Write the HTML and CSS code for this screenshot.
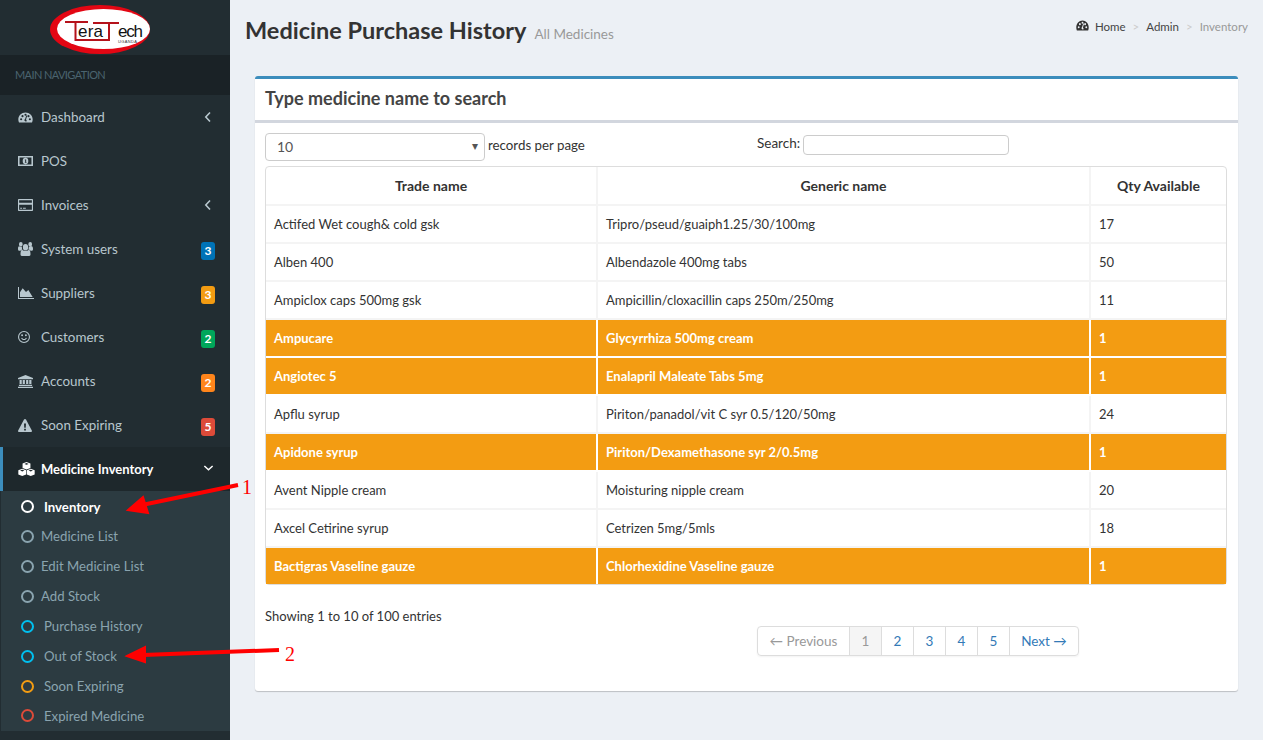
FILE: index.html
```html
<!DOCTYPE html>
<html>
<head>
	<title>Medicine Purchase History</title>
	<link rel="stylesheet" href="styles.css">
</head>
<body>
	<svg width="0" height="0" class="defs">
		<symbol id="i-gauge" viewBox="0 0 24 18" preserveAspectRatio="none"><path fill-rule="evenodd" d="M12 1C5.600 1 .5 6.100.5 12.300c0 1.800.4 3.400 1.100 4.700h20.800c.7-1.300 1.100-2.900 1.100-4.700C23.500 6.100 18.400 1 12 1zM5 13.500a1.700 1.700 0 1 1 0-3.400 1.700 1.700 0 0 1 0 3.400zm2.200-5a1.700 1.700 0 1 1 0-3.400 1.700 1.700 0 0 1 0 3.400zM12 6.200a1.700 1.700 0 1 1 0-3.400 1.700 1.700 0 0 1 0 3.400zm1.800 8.800a2.200 2.200 0 0 1-3.600-1.800c.1-.7.500-1.300 1.100-1.600l2-6 1.500.5-2 6c.9.700 1.300 1.900 1 2.900zm3-6.500a1.700 1.700 0 1 1 0-3.400 1.700 1.700 0 0 1 0 3.400zM19 13.500a1.700 1.700 0 1 1 0-3.400 1.700 1.700 0 0 1 0 3.400z"/></symbol>
		<symbol id="i-money" viewBox="0 0 24 14" preserveAspectRatio="none"><path fill-rule="evenodd" d="M0 0h24v14H0zM2.500 2.200v9.600h19V2.200zM12 2.500a4.500 4.500 0 1 1 0 9 4.500 4.500 0 0 1 0-9zM11 5v1h.5v2.500H11v1h2.500v-1H13V5z"/></symbol>
		<symbol id="i-card" viewBox="0 0 24 18" preserveAspectRatio="none"><path fill-rule="evenodd" d="M1.500 0h21c.8 0 1.500.7 1.500 1.500v15c0 .8-.7 1.500-1.500 1.500h-21C.7 18 0 17.300 0 16.500v-15C0 .7.700 0 1.500 0zm.3 1.800v3.700h20.400V1.800zm0 6.700v7.700h20.400V8.500zM3.500 13h3v1.500h-3zm4.500 0h4.500v1.500H8z"/></symbol>
		<symbol id="i-users" viewBox="0 0 24 18" preserveAspectRatio="none"><path d="M7.500 9.500c-1.400 0-2.800.7-3.500 1.800H2C.7 11.300 0 10.500 0 9c0-2 .5-3.500 1.800-3.500.3 0 1.500 1 3 1 .5 0 1-.1 1.500-.3-.1.500-.1.800-.1 1.200 0 .9.300 1.800.8 2.600zM4.500 0a3 3 0 1 1 0 6 3 3 0 0 1 0-6zm15 0a3 3 0 1 1 0 6 3 3 0 0 1 0-6zM12 2.500a4.200 4.200 0 1 1 0 8.400 4.200 4.200 0 0 1 0-8.400zM18 18H6c-1.300 0-2-.8-2-2.200 0-2.700.5-5.800 2.800-5.800.3 0 1.800 1.700 5.200 1.700s4.900-1.700 5.200-1.700c2.300 0 2.800 3.100 2.800 5.800C20 17.200 19.300 18 18 18zm2-6.700c-.7-1.100-2.100-1.800-3.500-1.800.5-.8.800-1.700.8-2.600 0-.4 0-.7-.1-1.200.5.200 1 .3 1.500.3 1.500 0 2.700-1 3-1C23.500 5.500 24 7 24 9c0 1.500-.7 2.300-2 2.300z"/></symbol>
		<symbol id="i-area" viewBox="0 0 24 18" preserveAspectRatio="none"><path d="M1.500 0v16.500H24V18H0V0zM3 15V8l4-6 5 5.500 3.500-3L22 15z"/></symbol>
		<symbol id="i-smile" viewBox="0 0 24 24"><path fill-rule="evenodd" d="M12 0a12 12 0 1 1 0 24 12 12 0 0 1 0-24zm0 2.200a9.800 9.800 0 1 0 0 19.600 9.800 9.800 0 0 0 0-19.600zM8.200 6.500a1.900 1.900 0 1 1 0 3.800 1.900 1.900 0 0 1 0-3.800zm7.600 0a1.900 1.900 0 1 1 0 3.800 1.900 1.900 0 0 1 0-3.800zM6.200 14l2-.6c.7 1.600 2.100 2.500 3.800 2.500s3.100-.9 3.800-2.500l2 .6c-.9 2.500-3.100 4.100-5.800 4.100S7.100 16.500 6.200 14z"/></symbol>
		<symbol id="i-bank" viewBox="0 0 24 20" preserveAspectRatio="none"><path d="M12 0l12 4.500v2H0v-2zM2.500 7.500h3.500V14H2.500zM7.500 7.500H11V14H7.500zM13 7.500h3.500V14H13zM18 7.500h3.500V14H18zM1.500 15h21v2h-21zM0 18h24v2H0z"/></symbol>
		<symbol id="i-warn" viewBox="0 0 24 22" preserveAspectRatio="none"><path fill-rule="evenodd" d="M12 0c.7 0 1.300.4 1.700 1l10 18.500c.7 1.200-.2 2.500-1.500 2.500H1.800C.5 22-.4 20.700.3 19.500L10.300 1c.4-.6 1-1 1.700-1zM10.300 7.500l.4 7.500h2.600l.4-7.500zM10.500 16.500v3h3v-3z"/></symbol>
		<symbol id="i-cubes" viewBox="0 0 26 20" preserveAspectRatio="none"><path fill-rule="evenodd" d="M13 0l6 2.200v6.300L13 10.700 7 8.500V2.200zM13 1.500L9.700 2.700 13 3.900l3.300-1.200zM6.500 9.500l6 2.200v6.100l-6 2.200-6-2.200v-6.100zM19.500 9.500l6 2.200v6.100l-6 2.200-6-2.200v-6.100zM6.500 11l-3.300 1.200 3.300 1.200 3.300-1.200zM19.500 11l-3.300 1.200 3.300 1.200 3.300-1.200z"/></symbol>
	</svg>

	<div class="wrapper">
		<aside class="sidebar">
			<div class="logo">
				<svg width="102" height="52" viewBox="0 0 102 52">
					<ellipse cx="51" cy="25.500" rx="50" ry="24.500" fill="#e30613"/>
					<ellipse cx="54.500" cy="25" rx="46.500" ry="20" fill="#fff"/>
					<path d="M16 18h23M26.500 18v18H61M44 19h26M60 19v17" fill="none" stroke="#b5121b" stroke-width="2"/>
					<text x="29" y="33" class="logo-text" textLength="25">era</text>
					<text x="69" y="33" class="logo-text" textLength="25">ech</text>
					<text x="69" y="38.500" class="logo-small" textLength="19">UGANDA</text>
				</svg>
			</div>
			<div class="nav-header">MAIN NAVIGATION</div>
			<ul class="menu">
				<li><span class="slot"><svg class="ico gauge"><use href="#i-gauge"/></svg></span><span class="label">Dashboard</span>
					<svg class="caret" viewBox="0 0 8 12"><path d="M6 1.500L1.800 6 6 10.500" fill="none" stroke="currentColor" stroke-width="1.600"/></svg></li>
				<li><span class="slot"><svg class="ico money"><use href="#i-money"/></svg></span><span class="label">POS</span></li>
				<li><span class="slot"><svg class="ico card"><use href="#i-card"/></svg></span><span class="label">Invoices</span>
					<svg class="caret" viewBox="0 0 8 12"><path d="M6 1.500L1.800 6 6 10.500" fill="none" stroke="currentColor" stroke-width="1.600"/></svg></li>
				<li><span class="slot"><svg class="ico users"><use href="#i-users"/></svg></span><span class="label">System users</span><span class="badge blue">3</span></li>
				<li><span class="slot"><svg class="ico area"><use href="#i-area"/></svg></span><span class="label">Suppliers</span><span class="badge yellow">3</span></li>
				<li><span class="slot"><svg class="ico smile"><use href="#i-smile"/></svg></span><span class="label">Customers</span><span class="badge green">2</span></li>
				<li><span class="slot"><svg class="ico bank"><use href="#i-bank"/></svg></span><span class="label">Accounts</span><span class="badge orange">2</span></li>
				<li><span class="slot"><svg class="ico warn"><use href="#i-warn"/></svg></span><span class="label">Soon Expiring</span><span class="badge red">5</span></li>
				<li class="active"><span class="slot"><svg class="ico cubes"><use href="#i-cubes"/></svg></span><span class="label">Medicine Inventory</span>
					<svg class="caret down" viewBox="0 0 12 8"><path d="M1.500 1.800L6 6l4.500-4.200" fill="none" stroke="currentColor" stroke-width="1.600"/></svg></li>
			</ul>
			<ul class="submenu">
				<li class="current"><i class="dot white"></i><span class="pad">Inventory</span></li>
				<li><i class="dot"></i><span>Medicine List</span></li>
				<li><i class="dot"></i><span>Edit Medicine List</span></li>
				<li><i class="dot"></i><span>Add Stock</span></li>
				<li><i class="dot cyan"></i><span class="pad">Purchase History</span></li>
				<li><i class="dot cyan"></i><span class="pad">Out of Stock</span></li>
				<li><i class="dot amber"></i><span class="pad">Soon Expiring</span></li>
				<li><i class="dot crimson"></i><span class="pad">Expired Medicine</span></li>
			</ul>
		</aside>

		<main class="content">
			<div class="content-header">
				<h1>Medicine Purchase History <small>All Medicines</small></h1>
				<ol class="breadcrumb">
					<li><svg class="crumb-ico"><use href="#i-gauge"/></svg>Home</li>
					<li class="sep">&gt;</li>
					<li>Admin</li>
					<li class="sep">&gt;</li>
					<li class="muted">Inventory</li>
				</ol>
			</div>

			<section class="box">
				<h3 class="box-title">Type medicine name to search</h3>
				<div class="box-body">
					<div class="controls">
						<div class="length">
							<div class="select">10<span class="arrow">&#9662;</span></div>
							<span>records per page</span>
						</div>
						<div class="search">Search: <span class="search-input"></span></div>
					</div>

					<table class="grid">
						<thead>
							<tr><th>Trade name</th><th>Generic name</th><th>Qty Available</th></tr>
						</thead>
						<tbody>
							<tr><td>Actifed Wet cough&amp; cold gsk</td><td>Tripro/pseud/guaiph1.25/30/100mg</td><td>17</td></tr>
							<tr><td>Alben 400</td><td>Albendazole 400mg tabs</td><td>50</td></tr>
							<tr><td>Ampiclox caps 500mg gsk</td><td>Ampicillin/cloxacillin caps 250m/250mg</td><td>11</td></tr>
							<tr class="low"><td>Ampucare</td><td>Glycyrrhiza 500mg cream</td><td>1</td></tr>
							<tr class="low"><td>Angiotec 5</td><td>Enalapril Maleate Tabs 5mg</td><td>1</td></tr>
							<tr><td>Apflu syrup</td><td>Piriton/panadol/vit C syr 0.5/120/50mg</td><td>24</td></tr>
							<tr class="low"><td>Apidone syrup</td><td>Piriton/Dexamethasone syr 2/0.5mg</td><td>1</td></tr>
							<tr><td>Avent Nipple cream</td><td>Moisturing nipple cream</td><td>20</td></tr>
							<tr><td>Axcel Cetirine syrup</td><td>Cetrizen 5mg/5mls</td><td>18</td></tr>
							<tr class="low"><td>Bactigras Vaseline gauze</td><td>Chlorhexidine Vaseline gauze</td><td>1</td></tr>
						</tbody>
					</table>

					<div class="info">Showing 1 to 10 of 100 entries</div>
					<ul class="pagination">
						<li class="disabled prev">&larr; Previous</li>
						<li class="on">1</li>
						<li>2</li>
						<li>3</li>
						<li>4</li>
						<li>5</li>
						<li class="next">Next &rarr;</li>
					</ul>
				</div>
			</section>
		</main>
	</div>

	<!-- red annotation arrows drawn over the screenshot -->
	<svg class="notes" width="320" height="740" viewBox="0 0 320 740">
		<path d="M238 485L142 505" stroke="#f00" stroke-width="4"/>
		<path d="M128 510L143 497 148 513z" fill="#f00" stroke="#f00" stroke-width="2"/>
		<path d="M279 650L143 655" stroke="#f00" stroke-width="4"/>
		<path d="M127 656L145 647 145 662z" fill="#f00" stroke="#f00" stroke-width="2"/>
		<text x="242" y="494" class="note-num">1</text>
		<text x="285" y="661" class="note-num">2</text>
	</svg>
</body>
</html>
```

FILE: styles.css
```css
* {
	box-sizing: border-box;
}

html, body {
	height: 740px;
	overflow: hidden;
}

body {
	margin: 0;
	background-color: #ecf0f5;
	font-family: "Lato", "Open Sans", sans-serif;
	font-size: 13px;
	color: #333;
}

ul, ol {
	list-style: none;
	margin: 0;
	padding: 0;
}

.defs {
	position: absolute;
}

.wrapper {
	display: flex;
	height: 740px;
}

/* sidebar */
.sidebar {
	width: 230px;
	flex: none;
	background-color: #222d32;
	color: #b8c7ce;
}

.logo {
	height: 55px;
	padding: 4px 0 0 49px;
}

.logo-text {
	font-family: "Liberation Sans", sans-serif;
	font-size: 17px;
	fill: #111;
}

.logo-small {
	font-family: "Liberation Sans", sans-serif;
	font-size: 4px;
	fill: #333;
}

.nav-header {
	height: 40px;
	line-height: 40px;
	padding-left: 15px;
	font-size: 11px;
	letter-spacing: -0.6px;
	color: #4b646f;
	background-color: #1a2226;
}

.menu li {
	display: flex;
	align-items: center;
	height: 44px;
	padding: 0 15px 0 18px;
	font-size: 13.4px;
}

.slot {
	display: flex;
	align-items: center;
	width: 23px;
	height: 16px;
	flex: none;
}

.ico {
	fill: currentColor;
}

.gauge { width: 15px; height: 11px; }
.money { width: 15px; height: 10px; }
.card { width: 15px; height: 12px; }
.users { width: 15px; height: 14px; }
.area { width: 16px; height: 12px; }
.smile { width: 12px; height: 12px; }
.bank { width: 15px; height: 13px; }
.warn { width: 14px; height: 13px; }
.cubes { width: 17px; height: 14px; }

.label {
	flex: 1;
}

.caret {
	width: 8px;
	height: 12px;
	margin-right: 3px;
}

.caret.down {
	width: 11px;
	height: 8px;
	margin-right: 1px;
	margin-bottom: 2px;
}

.badge {
	width: 14px;
	height: 18px;
	margin-top: 4px;
	border-radius: 3px;
	color: #fff;
	font-size: 12px;
	font-weight: bold;
	line-height: 18px;
	text-align: center;
}

.blue { background-color: #0073b7; }
.yellow { background-color: #f39c12; }
.green { background-color: #00a65a; }
.orange { background-color: #ff851b; }
.red { background-color: #dd4b39; }

.menu .active {
	background-color: #1e282c;
	border-left: 3px solid #3c8dbc;
	padding-left: 15px;
	color: #fff;
	font-size: 13px;
	font-weight: bold;
}

.submenu {
	background-color: #2c3b41;
	margin-left: 1px;
	height: 240px;
	color: #8aa4af;
	font-size: 13.2px;
}

.submenu li {
	display: flex;
	align-items: center;
	height: 30px;
	padding-left: 20px;
}

.submenu .current {
	color: #fff;
	font-weight: bold;
	padding-top: 1px;
}

.submenu li:last-child {
	height: 29px;
}

.dot {
	width: 13px;
	height: 13px;
	margin-right: 7px;
	border: 2px solid #8aa4af;
	border-radius: 50%;
	flex: none;
}

.dot.white { border-color: #fff; }
.dot.cyan { border-color: #00c0ef; }
.dot.amber { border-color: #f39c12; }
.dot.crimson { border-color: #dd4b39; }

.pad {
	padding-left: 3px;
}

/* main column */
.content {
	flex: 1;
	min-width: 0;
	padding-right: 25px;
	padding-left: 25px;
}

.content-header {
	display: flex;
	justify-content: space-between;
	height: 76px;
	margin-left: -10px;
	margin-right: -10px;
}

h1 {
	margin: 14px 0 0;
	font-size: 23.5px;
	line-height: 32px;
	color: #333;
}

h1 small {
	margin-left: 3px;
	font-size: 13.5px;
	font-weight: normal;
	color: #999;
}

.breadcrumb {
	display: flex;
	gap: 7px;
	height: 20px;
	margin-top: 18px;
	font-size: 11.5px;
	line-height: 18px;
	color: #444;
}

.crumb-ico {
	width: 13px;
	height: 11px;
	margin-right: 6px;
	fill: #333;
}

.sep, .muted {
	color: #999;
}

.sep {
	color: #ccc;
}

.box {
	height: 615px;
	background-color: #fff;
	border-top: 3px solid #3c8dbc;
	border-radius: 3px;
	box-shadow: 0 1px 1px rgba(0,0,0,0.2);
}

.box-title {
	height: 44px;
	margin: 0;
	padding: 9px 10px;
	font-size: 18px;
	line-height: 20px;
	color: #444;
	border-bottom: 3px solid #d2d6de;
}

.box-body {
	padding: 10px 11px 0 10px;
}

.controls {
	display: flex;
	height: 33px;
}

.length {
	display: flex;
	gap: 3px;
	width: 492px;
	font-size: 13.3px;
	line-height: 24px;
}

.select {
	position: relative;
	width: 220px;
	height: 28px;
	padding-left: 11px;
	border: 1px solid #ccc;
	border-radius: 4px;
	font-size: 14px;
	line-height: 25px;
	color: #555;
}

.arrow {
	position: absolute;
	right: 6px;
	top: -1px;
	font-size: 12px;
}

.search {
	display: flex;
	align-items: flex-start;
	gap: 3px;
	font-size: 13.5px;
	line-height: 20px;
}

.search-input {
	width: 206px;
	height: 20px;
	margin-top: 2px;
	border: 1px solid #ccc;
	border-radius: 4px;
}

.grid {
	width: 962px;
	height: 419px;
	border-collapse: separate;
	border-spacing: 0;
	border: 1px solid #ddd;
	border-radius: 4px;
	table-layout: fixed;
}

.grid th {
	height: 39px;
	padding-bottom: 2px;
	border-bottom: 2px solid #f4f4f4;
	border-right: 2px solid #f4f4f4;
	text-align: center;
	font-size: 14px;
}

.grid th:first-child {
	width: 332px;
}

.grid th:last-child {
	width: 135px;
}

.grid td {
	height: 38px;
	padding: 0 8px;
	border-bottom: 2px solid #f4f4f4;
	border-right: 2px solid #f4f4f4;
}

.grid th:last-child,
.grid td:last-child {
	border-right: 0;
}

.grid .low td {
	background-color: #f39c12;
	border-color: #fff;
	color: #fff;
	font-weight: bold;
}

.grid tr:last-child td {
	height: 36px;
	border-bottom: 0;
}

.info {
	margin-top: 21px;
	line-height: 20px;
}

.pagination {
	display: flex;
	width: 322px;
	height: 30px;
	margin-left: 492px;
	border: 1px solid #ddd;
	border-radius: 4px;
	font-size: 13.5px;
	color: #337ab7;
	box-shadow: 0 1px 2px rgba(0,0,0,0.05);
}

.pagination li {
	width: 32px;
	line-height: 28px;
	text-align: center;
	border-right: 1px solid #ddd;
}

.pagination .prev {
	width: 92px;
}

.pagination .next {
	flex: 1;
	border-right: 0;
}

.pagination .disabled {
	color: #999;
}

.pagination .on {
	background-color: #f5f5f5;
	color: #999;
}

/* annotations */
.notes {
	position: absolute;
	left: 0;
	top: 0;
}

.note-num {
	font-family: "Liberation Serif", serif;
	font-size: 20px;
	fill: #f00;
}
```
